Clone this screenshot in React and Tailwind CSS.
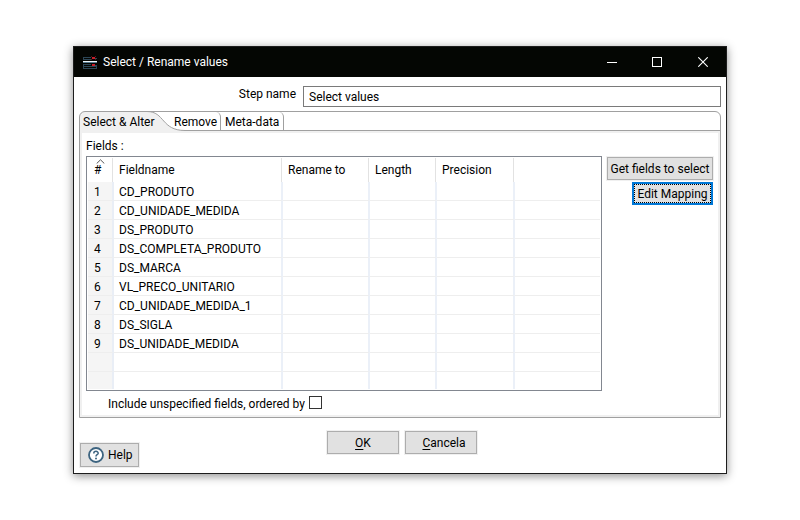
import React from 'react';

const fields = [
  'CD_PRODUTO',
  'CD_UNIDADE_MEDIDA',
  'DS_PRODUTO',
  'DS_COMPLETA_PRODUTO',
  'DS_MARCA',
  'VL_PRECO_UNITARIO',
  'CD_UNIDADE_MEDIDA_1',
  'DS_SIGLA',
  'DS_UNIDADE_MEDIDA',
  '',
  '',
];

const columns = ['Fieldname', 'Rename to', 'Length', 'Precision', ''];

function StepIcon() {
  return (
    <svg width="14" height="13" viewBox="0 0 14 13" shapeRendering="crispEdges" aria-hidden="true">
      <path d="M0.5 3V1.5H8M0 3.5H8" stroke="#2c4656" fill="none" />
      <path d="M12 2.5H14M12 9.5H14" stroke="#2c4656" />
      <path d="M0 5.5H14" stroke="#eef6fa" />
      <path d="M0 6.5H14" stroke="#55798e" />
      <path d="M0.5 11V8.5H8" stroke="#2c4656" fill="none" />
      <path d="M0 10.5H14M0.5 10V12.5H13.5V10" stroke="#2c4656" fill="none" />
      <path d="M9 1h3v2H9zM9 8h3v2H9z" fill="#c81e2a" />
      <path d="M8 0h1v1H8zM12 0h1v1h-1zM8 3h1v1H8zM12 3h1v1h-1z" fill="#5c1218" />
    </svg>
  );
}

function TitleBar() {
  return (
    <header className="flex h-[30px] items-center bg-[#040603] pl-[9px] text-white">
      <StepIcon />
      <h1 className="ml-[6px] flex-1 text-[12px] leading-4">Select / Rename values</h1>
      <button type="button" aria-label="Minimize" className="flex h-full w-[45px] items-center justify-center">
        <svg width="10" height="10" viewBox="0 0 10 10" shapeRendering="crispEdges">
          <path d="M0 5.5H10" stroke="white" />
        </svg>
      </button>
      <button type="button" aria-label="Maximize" className="flex h-full w-[45px] items-center justify-center">
        <svg width="10" height="10" viewBox="0 0 10 10" shapeRendering="crispEdges">
          <path d="M0.5 0.5H9.5V9.5H0.5Z" stroke="white" fill="none" />
        </svg>
      </button>
      <button type="button" aria-label="Close" className="flex h-full w-[47px] items-center justify-center">
        <svg width="10" height="10" viewBox="0 0 10 10">
          <path d="M0.3 0.3L9.7 9.7M9.7 0.3L0.3 9.7" stroke="white" strokeWidth="1.1" />
        </svg>
      </button>
    </header>
  );
}

function Tabs() {
  return (
    <div role="tablist" className="flex h-[18px] items-stretch leading-4">
      <button type="button" role="tab" aria-selected="true" className="relative w-[91px] pt-px pl-[3px] text-left">
        <svg
          className="absolute -top-px -left-px"
          width="110"
          height="20"
          viewBox="0 0 110 20"
          aria-hidden="true"
        >
          <path d="M0 20V6L5 0.5H68C86 0.5 82 19.5 106 19.5V20Z" fill="#f0f0f0" />
          <path d="M0.5 20V6C0.5 3 3 0.5 6 0.5H68C86 0.5 82 19.5 106 19.5" fill="none" stroke="#a0a0a0" />
        </svg>
        <span className="relative">Select &amp; Alter</span>
      </button>
      <button type="button" role="tab" aria-selected="false" className="relative w-[50px] rounded-tr-[5px] border-r border-[#a0a0a0] pt-px pl-[3px] text-left">
        Remove
      </button>
      <button type="button" role="tab" aria-selected="false" className="w-[63px] rounded-tr-[5px] border-r border-[#a0a0a0] pt-px pl-[4px] text-left">
        Meta-data
      </button>
    </div>
  );
}

function FieldTable() {
  return (
    <div className="h-[235px] min-w-0 flex-1 overflow-hidden border border-[#828790] p-px">
      <div className="h-full overflow-hidden">
        <table className="w-full table-fixed border-separate border-spacing-0">
          <colgroup>
            <col className="w-[26px]" />
            <col className="w-[169px]" />
            <col className="w-[87px]" />
            <col className="w-[67px]" />
            <col className="w-[78px]" />
            <col />
          </colgroup>
          <thead>
            <tr>
              <th scope="col" className="p-0 text-left font-normal">
                <div className="relative mr-px h-[24px] border-r border-[#e2e2e2] pl-[6px] leading-[24px]">
                  #
                  <svg className="absolute top-[1px] left-[8px]" width="9" height="5" viewBox="0 0 9 5" aria-hidden="true">
                    <path d="M0.7 4.5L4.5 0.8L8.3 4.5" fill="none" stroke="#555" />
                  </svg>
                </div>
              </th>
              {columns.map((name, i) => (
                <th key={i} scope="col" className="group p-0 text-left font-normal">
                  <div className="mr-px h-[24px] border-r border-[#e2e2e2] pl-[5px] leading-[24px] group-last:border-r-0">
                    {name}
                  </div>
                </th>
              ))}
            </tr>
          </thead>
          <tbody>
            {fields.map((field, row) => (
              <tr key={row} className="h-[19px]">
                <td className="border-r-2 border-b border-r-[#e9eef6] border-b-[#eeeeee] bg-[#f5f5f5] p-0 pt-[2px] pl-[6px] leading-4">
                  {field ? row + 1 : ''}
                </td>
                {columns.map((_, i) => (
                  <td
                    key={i}
                    className="border-r-2 border-b border-r-[#ebf0f8] border-b-[#eeeeee] p-0 pt-[2px] pl-[5px] leading-4 last:border-r-0"
                  >
                    {i === 0 ? field : ''}
                  </td>
                ))}
              </tr>
            ))}
          </tbody>
        </table>
      </div>
    </div>
  );
}

const plainButton = 'border border-[#adadad] bg-[#e1e1e1] shadow-[0_0_0_1px_#f0f0f0]';

export default function App() {
  return (
    <div className="min-h-screen bg-white px-[73px] py-[46px] font-['Roboto',sans-serif] text-[12px] text-black">
      <main className="border border-[#1d1d1d] bg-white shadow-[0_2px_9px_rgba(0,0,0,0.45)]">
        <TitleBar />
        <form className="px-[5px] pt-[9px] pb-[6px]" onSubmit={(e) => e.preventDefault()}>
          <div className="flex">
            <label htmlFor="step" className="w-[224px] shrink-0 pr-[7px] text-right leading-4">
              Step name
            </label>
            <input
              id="step"
              type="text"
              defaultValue="Select values"
              className="h-[21px] min-w-0 flex-1 border border-[#7a7a7a] px-[5px] outline-none"
            />
          </div>

          <section className="mt-[4px] overflow-hidden rounded-t-[6px] border border-[#a0a0a0]">
            <Tabs />
            <div className="border-2 border-t-0 border-[#f0f0f0]">
              <div className="-mr-[2px] ml-[102px] h-px bg-[#a0a0a0]" />
              <div className="-mx-[2px] h-[2px] bg-[#f0f0f0]" />
              <div role="tabpanel" className="pt-[5px] pr-[5px] pb-[3px] pl-[4px]">
                <p className="leading-4">Fields :</p>
                <div className="mt-[2px] flex gap-[5px]">
                  <FieldTable />
                  <div className="flex flex-col items-end gap-[2px] pt-px">
                    <button type="button" className={plainButton + ' h-[23px] w-[106px] whitespace-nowrap'}>
                      Get fields to select
                    </button>
                    <button type="button" className="h-[23px] w-[81px] border-2 border-[#0078d7] bg-[#e1e1e1]">
                      <span className="flex h-full items-center justify-center border border-dotted border-black whitespace-nowrap">
                        Edit Mapping
                      </span>
                    </button>
                  </div>
                </div>
                <div className="mt-[5px] flex items-start gap-[4px] pl-[22px]">
                  <label htmlFor="unspecified" className="leading-4">
                    Include unspecified fields, ordered by
                  </label>
                  <input
                    id="unspecified"
                    type="checkbox"
                    className="h-[13px] w-[13px] appearance-none border border-[#333333] bg-white"
                  />
                </div>
              </div>
            </div>
          </section>

          <div className="grid grid-cols-[1fr_auto_1fr] pt-[13px] pl-px">
            <button
              type="button"
              className={plainButton + ' mt-[12px] flex h-[24px] w-[59px] items-center gap-[4px] pl-[7px]'}
            >
              <svg width="16" height="16" viewBox="0 0 16 16" aria-hidden="true">
                <circle cx="8" cy="8" r="7" fill="white" stroke="#3d6480" strokeWidth="1.8" />
                <path d="M5.8 6.4C5.8 3.6 10.2 3.7 10.2 6.2C10.2 7.7 8 7.7 8 9.4" fill="none" stroke="#3d6480" strokeWidth="1.5" />
                <circle cx="8" cy="11.5" r="1" fill="#3d6480" />
              </svg>
              Help
            </button>
            <div className="ml-[3px] flex gap-[6px]">
              <button type="button" className={plainButton + ' h-[23px] w-[72px]'}>
                <u className="underline-offset-2">O</u>K
              </button>
              <button type="button" className={plainButton + ' h-[23px] w-[72px] pl-[6px]'}>
                <u className="underline-offset-2">C</u>ancela
              </button>
            </div>
          </div>
        </form>
      </main>
    </div>
  );
}
